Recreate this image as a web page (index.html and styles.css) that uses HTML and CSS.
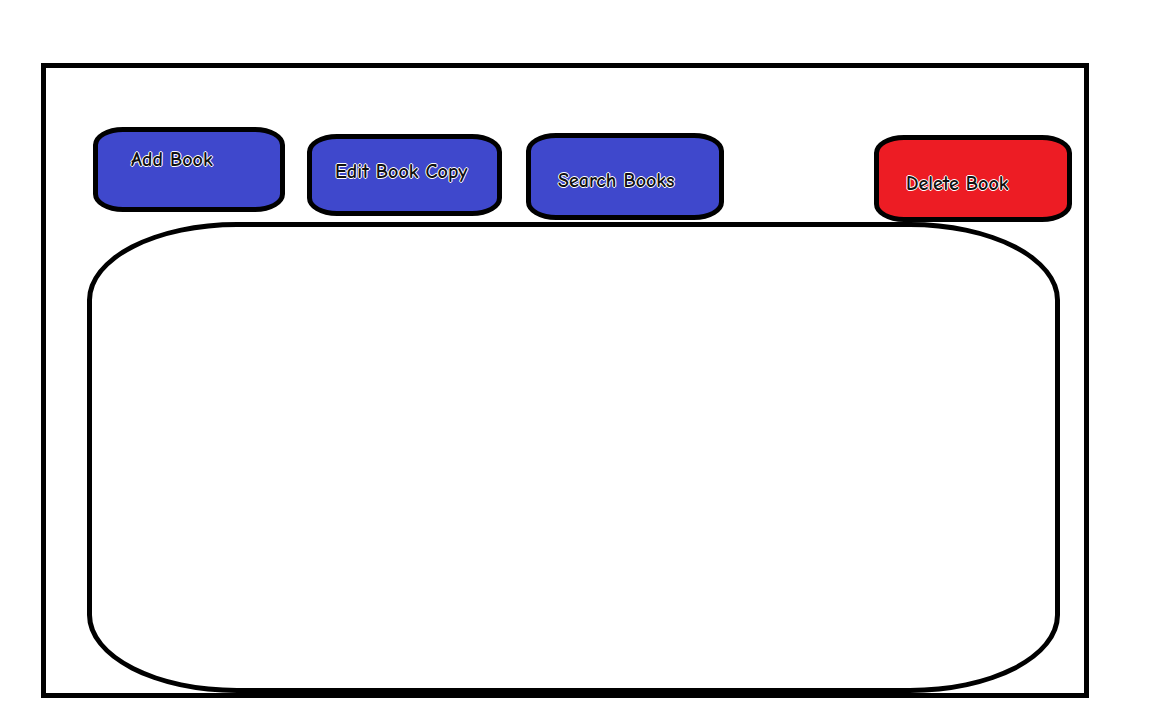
FILE: index.html
```html
<!DOCTYPE html>
<html lang="en">
<head>
<meta charset="utf-8">
<meta name="viewport" content="width=device-width, initial-scale=1">
<title>Books</title>
<link rel="stylesheet" href="styles.css">
</head>
<body class="page">
<main class="frame">
  <nav class="toolbar" aria-label="Book actions">
    <button type="button" class="action add">Add Book</button>
    <button type="button" class="action edit">Edit Book Copy</button>
    <button type="button" class="action search">Search Books</button>
    <button type="button" class="action delete">Delete Book</button>
  </nav>
  <section class="panel" aria-label="Book list"></section>
</main>
</body>
</html>
```

FILE: styles.css
```css
* {
  box-sizing: border-box;
}

.page {
  display: flex;
  min-height: 100vh;
  margin: 0;
  padding: 63px 63px 22px 41px;
  background: #fff;
  font-family: "Comic Sans MS", "Comic Neue", "DejaVu Sans", sans-serif;
}

.frame {
  display: flex;
  flex: 1;
  flex-direction: column;
  padding-top: 59px;
  border: 5px solid #000;
}

.toolbar {
  display: flex;
  align-items: flex-start;
  min-height: 95px;
  padding: 0 12px 0 47px;
}

.action {
  display: flex;
  align-items: flex-start;
  border: 5px solid #000;
  border-radius: 30px / 18px;
  background: #3f48cc;
  color: #111;
  font-family: inherit;
  font-size: 20px;
  font-weight: 700;
  line-height: 24px;
  white-space: nowrap;
  text-shadow: 1px 0 #fff, -1px 0 #fff, 0 1px #fff, 0 -1px #fff;
  cursor: pointer;
}

.add {
  width: 192px;
  height: 85px;
  padding: 16px 0 0 33px;
}

.edit {
  width: 195px;
  height: 82px;
  margin: 7px 0 0 22px;
  padding: 21px 0 0 23px;
}

.search {
  width: 198px;
  height: 87px;
  margin: 6px 0 0 24px;
  padding: 31px 0 0 27px;
}

.delete {
  width: 198px;
  height: 87px;
  margin: 8px 0 0 auto;
  padding: 32px 0 0 27px;
  background: #ed1c24;
}

.panel {
  flex: 1;
  min-height: 200px;
  margin: 0 24px 0 41px;
  border: 5px solid #000;
  border-radius: 150px / 78px;
}
```
